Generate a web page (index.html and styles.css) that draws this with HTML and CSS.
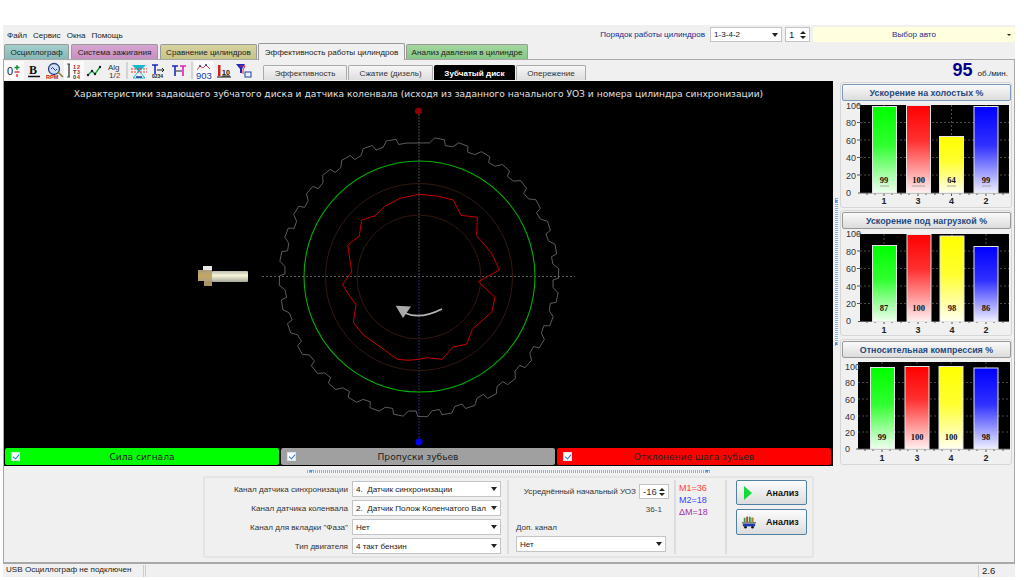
FILE: index.html
```html
<!DOCTYPE html>
<html lang="ru">
<head>
<meta charset="utf-8">
<title>Эффективность работы цилиндров</title>
<link rel="stylesheet" href="styles.css">
</head>
<body>
<div class="app">
  <header class="topbar">
    <nav class="menu"><span>Файл</span><span>Сервис</span><span>Окна</span><span>Помощь</span></nav>
    <div class="top-controls">
      <span class="order-label">Порядок работы цилиндров</span>
      <div class="select order-select"><span>1-3-4-2</span><i class="arrow"></i></div>
      <div class="spin cyl-spin"><span>1</span><b class="spin-btns"><i class="up"></i><i class="down"></i></b></div>
      <div class="auto-select"><span>Выбор авто</span><i class="arrow small"></i></div>
    </div>
  </header>
  <div class="tabs">
    <div class="tab t-teal">Осциллограф</div>
    <div class="tab t-pink">Система зажигания</div>
    <div class="tab t-khaki">Сравнение цилиндров</div>
    <div class="tab t-active">Эффективность работы цилиндров</div>
    <div class="tab t-green">Анализ давления в цилиндре</div>
  </div>
  <main class="main">
    <div class="toolrow">
      <div class="toolgroup">
        <div class="tool on"><svg viewBox="0 0 16 16"><text x="1" y="12" class="ti-zero">0</text><path d="M11 2v5M8.500 4.500h5" stroke="#0a8a2a" stroke-width="1.300"/><path d="M8.500 9h5" stroke="#e02020" stroke-width="1.300"/><path d="M11 11v3" stroke="#e02020" stroke-width="1.300"/></svg></div>
        <div class="tool"><svg viewBox="0 0 16 16"><text x="3" y="11" class="ti-b">B</text><path d="M2 13.500h12" stroke="#111" stroke-width="1.500"/></svg></div>
        <div class="tool"><svg viewBox="0 0 16 16"><circle cx="8" cy="6" r="5.500" fill="#cfe0f5" stroke="#27408b" stroke-width="1.300"/><path d="M5 6q1.500-3 3 0t3 0" fill="none" stroke="#27408b"/><path d="M12 9l5 5" stroke="#8a7a40" stroke-width="1.500"/><text x="0" y="15.500" class="ti-rpm">RPM</text></svg></div>
        <div class="tool on"><svg viewBox="0 0 16 16"><path d="M3 1v13" stroke="#333" stroke-width="1.300"/><path d="M1 1h3M1 14h3" stroke="#555"/><text x="7" y="6" class="ti-num r">1</text><text x="11" y="6" class="ti-num r">2</text><text x="7" y="11" class="ti-num">T</text><text x="11" y="11" class="ti-num r">3</text><text x="7" y="15.500" class="ti-num">0</text><text x="11" y="15.500" class="ti-num r">4</text></svg></div>
        <div class="tool"><svg viewBox="0 0 16 16"><path d="M2 12l4-4 3 3 5-7" fill="none" stroke="#12a030" stroke-width="1.300"/><circle cx="2" cy="12" r="1.200" fill="#123"/><circle cx="6" cy="8" r="1.200" fill="#123"/><circle cx="9" cy="11" r="1.200" fill="#123"/><circle cx="14" cy="4" r="1.200" fill="#123"/></svg></div>
        <div class="tool"><svg viewBox="0 0 16 16"><text x="2" y="7" class="ti-alg">Alg</text><text x="3" y="15" class="ti-alg">1/</text><text x="10" y="15" class="ti-alg r">2</text></svg></div>
      </div>
      <i class="toolsep"></i>
      <div class="toolgroup">
        <div class="tool"><svg viewBox="0 0 16 16"><path d="M1 2h14L8 9z" fill="#18b8c8"/><path d="M2 15h12L8 8z" fill="none" stroke="#18b8c8"/><path d="M0 6h16M0 9h16" stroke="#e03a3a" stroke-dasharray="2 1"/><path d="M5 14h6" stroke="#2030a0" stroke-width="1.500"/></svg></div>
        <div class="tool"><svg viewBox="0 0 16 16"><path d="M1 2h6M4 2v9" stroke="#1a2ac0" stroke-width="1.600"/><path d="M6 7h7M11 5l2 2-2 2" fill="none" stroke="#222"/><text x="1" y="15" class="ti-tiny">0234</text></svg></div>
        <div class="tool"><svg viewBox="0 0 16 16"><path d="M1 3h6M4 3v10" stroke="#1a2ac0" stroke-width="1.600"/><path d="M9 3h6M12 3v10" stroke="#e020c0" stroke-width="1.600"/><path d="M5 8h6" stroke="#222"/></svg></div>
      </div>
      <i class="toolsep"></i>
      <div class="toolgroup">
        <div class="tool on"><svg viewBox="0 0 16 16"><path d="M1 7l3-4 3 2 3-3 4 4" fill="none" stroke="#e04040"/><circle cx="4" cy="3" r="1" fill="#23a"/><circle cx="10" cy="2" r="1" fill="#23a"/><text x="0" y="15.500" class="ti-903">903</text></svg></div>
        <div class="tool"><svg viewBox="0 0 16 16"><path d="M2 2h2.500v11H2z" fill="#d02020"/><path d="M1 14h14" stroke="#111"/><text x="6" y="12" class="ti-ten">10</text><path d="M6 13h8" stroke="#111"/></svg></div>
        <div class="tool"><svg viewBox="0 0 16 16"><path d="M0 1h9L6 6v4H4V6z" fill="#1a2ac0"/><path d="M4 3l5 0-2 4v4" fill="none" stroke="#e02040"/><rect x="9" y="9" width="6" height="5" fill="#e8eeff" stroke="#2040a0"/></svg></div>
      </div>
      <div class="subtabs">
        <div class="subtab">Эффективность</div>
        <div class="subtab">Сжатие (дизель)</div>
        <div class="subtab sub-active">Зубчатый диск</div>
        <div class="subtab">Опережение</div>
      </div>
      <div class="rpm"><b>95</b><span>об./мин.</span></div>
    </div>

    <div class="work">
      <section class="canvas">
        <svg class="scope" viewBox="4 81 829 367">
          <text x="418.500" y="97" class="scope-title">Характеристики задающего зубчатого диска и датчика коленвала (исходя из заданного начального УОЗ и номера цилиндра синхронизации)</text>
          <path d="M262 276.500H575" class="cross-h"/>
          <path d="M419 111V277" class="cross-v"/>
          <path d="M419 277V442" class="cross-b"/>
          <circle cx="419" cy="277" r="93.500" class="ring"/>
          <circle cx="419" cy="277" r="62" class="ring"/>
          <circle cx="419.500" cy="276.500" r="115.500" class="ring-green"/>
          <polyline id="gear" class="gear" points=""/>
          <polygon class="trace" points="419,194.300 400,198.300 384.300,206.700 375,215.700 361.700,220 359.300,236 347.700,245 351.700,271.700 342.700,284.300 345.700,290 356,305 353.300,322.300 363.300,335 380,346.700 397.300,359.300 408.300,360.300 419,359.300 426.700,357.700 442.300,359.300 452.700,347.300 466.700,344 472.300,329.300 492,311.700 495,297.300 478.300,281.700 499.300,270 491.700,253.300 476.700,235.700 477.300,217.300 461,215.300 453.300,200 436.700,196"/>
          <circle cx="418.500" cy="111" r="3.500" fill="#8a0000"/>
          <circle cx="419" cy="442" r="3.500" fill="#0000f0"/>
          <path d="M442 309Q420 320 405 313" class="arrow-arc"/>
          <path d="M395.700 305.700L411 306.500 403 318z" fill="#aaaaaa"/>
          <rect x="212" y="271" width="36" height="11" rx="1" fill="url(#boltBody)"/>
          <rect x="203" y="266" width="9" height="5" fill="#e8e8e4"/>
          <rect x="198" y="270" width="14" height="11" fill="url(#boltHead)"/>
          <rect x="204" y="281" width="8" height="5" fill="#a89468"/>
          <defs>
            <linearGradient id="boltBody" x1="0" y1="0" x2="0" y2="1"><stop offset="0" stop-color="#bdbdb0"/><stop offset=".4" stop-color="#f7f5d8"/><stop offset="1" stop-color="#a8a89c"/></linearGradient>
            <linearGradient id="boltHead" x1="0" y1="0" x2="0" y2="1"><stop offset="0" stop-color="#a89a80"/><stop offset=".5" stop-color="#c4a860"/><stop offset="1" stop-color="#b0a080"/></linearGradient>
          </defs>
        </svg>
        <div class="signals">
          <div class="signal s-green"><i class="check"></i><span>Сила сигнала</span></div>
          <div class="signal s-gray"><i class="check"></i><span>Пропуски зубьев</span></div>
          <div class="signal s-red"><i class="check"></i><span>Отклонение шага зубьев</span></div>
        </div>
      </section>
      <div class="vsplit"></div>
      <aside class="charts">
        <section class="group">
          <button class="chart-title">Ускорение на холостых %</button>
          <svg class="chart" viewBox="842 101 168 106">
            <defs>
              <linearGradient id="gGreen" x1="0" y1="0" x2="0" y2="1"><stop offset="0" stop-color="#00ff00"/><stop offset=".45" stop-color="#30ff30"/><stop offset="1" stop-color="#f0fff0"/></linearGradient>
              <linearGradient id="gRed" x1="0" y1="0" x2="0" y2="1"><stop offset="0" stop-color="#ff0000"/><stop offset=".4" stop-color="#ff3030"/><stop offset="1" stop-color="#fff0f0"/></linearGradient>
              <linearGradient id="gYellow" x1="0" y1="0" x2="0" y2="1"><stop offset="0" stop-color="#ffff00"/><stop offset=".45" stop-color="#ffff30"/><stop offset="1" stop-color="#fffff0"/></linearGradient>
              <linearGradient id="gBlue" x1="0" y1="0" x2="0" y2="1"><stop offset="0" stop-color="#0000ff"/><stop offset=".45" stop-color="#3030ff"/><stop offset="1" stop-color="#f0f0ff"/></linearGradient>
            </defs>
            <rect x="860" y="105" width="149" height="88" fill="#000"/>
            <path d="M860 122.500h149M860 140h149M860 157.500h149M860 175h149M951.500 105v88M884 105v88M918 105v88M986 105v88" class="grid"/>
            <path d="M858 193h151" class="axis"/>
            <path d="M884 193v3M918 193v3M951.500 193v3M986 193v3M867 193v2M875 193v2M892 193v2M901 193v2M909 193v2M926 193v2M935 193v2M943 193v2M960 193v2M969 193v2M977 193v2M994 193v2M1003 193v2M857 105h3M857 122.500h3M857 140h3M857 157.500h3M857 175h3" class="ticks"/>
            <text x="846" y="108.500" class="ylab">100</text><text x="846" y="126" class="ylab">80</text><text x="846" y="143.500" class="ylab">60</text><text x="846" y="161" class="ylab">40</text><text x="846" y="178.500" class="ylab">20</text><text x="846" y="195.500" class="ylab">0</text>
            <rect x="872.500" y="106.500" width="24" height="86.500" fill="url(#gGreen)" class="bar"/>
            <rect x="906.500" y="105.500" width="24" height="87.500" fill="url(#gRed)" class="bar"/>
            <rect x="939.500" y="136.500" width="24" height="56.500" fill="url(#gYellow)" class="bar"/>
            <rect x="974" y="106.500" width="24" height="86.500" fill="url(#gBlue)" class="bar"/>
            <path d="M880 186h9M912 186h13M947 186h9M982 186h9" class="under"/>
            <text x="884" y="183" class="val">99</text><text x="918.500" y="183" class="val">100</text><text x="951.500" y="183" class="val">64</text><text x="986" y="183" class="val">99</text>
            <text x="884" y="204" class="xlab">1</text><text x="918" y="204" class="xlab">3</text><text x="951.500" y="204" class="xlab">4</text><text x="986" y="204" class="xlab">2</text>
          </svg>
        </section>
        <section class="group">
          <button class="chart-title">Ускорение под нагрузкой %</button>
          <svg class="chart" viewBox="842 229 168 106">
            <rect x="860" y="234" width="149" height="87" fill="#000"/>
            <path d="M860 251h149M860 268.500h149M860 286h149M860 303.500h149M884 234v87M918 234v87M952 234v87M986 234v87" class="grid"/>
            <path d="M858 321.500h151" class="axis"/>
            <path d="M884 321v3M918 321v3M952 321v3M986 321v3M867 321v2M875 321v2M892 321v2M901 321v2M909 321v2M926 321v2M935 321v2M943 321v2M960 321v2M969 321v2M977 321v2M994 321v2M1003 321v2M857 234h3M857 251h3M857 268.500h3M857 286h3M857 303.500h3" class="ticks"/>
            <text x="846" y="237" class="ylab">100</text><text x="846" y="254.500" class="ylab">80</text><text x="846" y="272" class="ylab">60</text><text x="846" y="289.500" class="ylab">40</text><text x="846" y="307" class="ylab">20</text><text x="846" y="324" class="ylab">0</text>
            <rect x="872.500" y="245.500" width="24" height="76" fill="url(#gGreen)" class="bar"/>
            <rect x="907" y="234.500" width="24" height="87" fill="url(#gRed)" class="bar"/>
            <rect x="940" y="236" width="24" height="85.500" fill="url(#gYellow)" class="bar"/>
            <rect x="974" y="246.500" width="24" height="75" fill="url(#gBlue)" class="bar"/>
            <text x="884" y="311" class="val">87</text><text x="918.500" y="311" class="val">100</text><text x="952" y="311" class="val">98</text><text x="986" y="311" class="val">86</text>
            <text x="884" y="333" class="xlab">1</text><text x="918" y="333" class="xlab">3</text><text x="952" y="333" class="xlab">4</text><text x="986" y="333" class="xlab">2</text>
          </svg>
        </section>
        <section class="group third">
          <button class="chart-title">Относительная компрессия %</button>
          <svg class="chart" viewBox="842 358 168 106">
            <rect x="858" y="362" width="152" height="87" fill="#000"/>
            <path d="M858 382.500h152M858 399h152M858 416h152M858 432h152M882 362v87M917 362v87M951 362v87M986 362v87" class="grid"/>
            <path d="M856 449h154" class="axis"/>
            <path d="M882 449v3M917 449v3M951 449v3M986 449v3M865 449v2M873 449v2M890 449v2M900 449v2M908 449v2M925 449v2M934 449v2M942 449v2M959 449v2M969 449v2M977 449v2M994 449v2M1003 449v2" class="ticks"/>
            <text x="845" y="369.500" class="ylab">100</text><text x="845" y="386" class="ylab">80</text><text x="845" y="402.500" class="ylab">60</text><text x="845" y="419.500" class="ylab">40</text><text x="845" y="435.500" class="ylab">20</text><text x="845" y="451.500" class="ylab">0</text>
            <rect x="870.500" y="367.500" width="24" height="81.500" fill="url(#gGreen)" class="bar"/>
            <rect x="905" y="366.500" width="24" height="82.500" fill="url(#gRed)" class="bar"/>
            <rect x="939" y="366.500" width="24" height="82.500" fill="url(#gYellow)" class="bar"/>
            <rect x="974" y="368" width="24" height="81" fill="url(#gBlue)" class="bar"/>
            <text x="882" y="440" class="val">99</text><text x="917" y="440" class="val">100</text><text x="951" y="440" class="val">100</text><text x="986" y="440" class="val">98</text>
            <text x="882" y="461" class="xlab">1</text><text x="917" y="461" class="xlab">3</text><text x="951" y="461" class="xlab">4</text><text x="986" y="461" class="xlab">2</text>
          </svg>
        </section>
      </aside>
    </div>

    <div class="formarea">
      <div class="hsplit"></div>
      <section class="formgroup">
        <div class="fields">
          <label>Канал датчика синхронизации</label><div class="select"><span>4.&nbsp; Датчик синхронизации</span><i class="arrow"></i></div>
          <label>Канал датчика коленвала</label><div class="select"><span>2.&nbsp; Датчик Полож Коленчатого Вал</span><i class="arrow"></i></div>
          <label>Канал для вкладки "Фаза"</label><div class="select"><span>Нет</span><i class="arrow"></i></div>
          <label>Тип двигателя</label><div class="select"><span>4 такт бензин</span><i class="arrow"></i></div>
        </div>
        <div class="col-uoz">
          <div class="uoz-row"><span>Усреднённый начальный УОЗ</span><div class="spin uoz-spin"><span>-16</span><b class="spin-btns"><i class="up"></i><i class="down"></i></b></div></div>
          <div class="teeth">36-1</div>
          <div class="extra-label">Доп. канал</div>
          <div class="select extra-select"><span>Нет</span><i class="arrow"></i></div>
        </div>
        <div class="col-m">
          <div class="m1">M1=36</div>
          <div class="m2">M2=18</div>
          <div class="m3">ΔM=18</div>
        </div>
        <div class="col-btn">
          <button class="run"><svg viewBox="0 0 14 16"><path d="M2 1l8 7-8 7z" fill="#16d83a"/></svg><span>Анализ</span></button>
          <button class="run tall"><svg viewBox="0 0 16 16"><path d="M3 3v5M6 2v6M9 2v6M12 3v5" stroke-width="2" stroke="#3a9a3a"/><path d="M6 2v6" stroke="#c04040" stroke-width="2"/><path d="M12 3v5" stroke="#b08a30" stroke-width="2"/><path d="M1 10h14v3H1z" fill="#1a3ab0"/><path d="M0 9h16" stroke="#222"/><circle cx="4" cy="14" r="1.500" fill="#111"/><circle cx="12" cy="14" r="1.500" fill="#111"/></svg><span>Анализ</span></button>
        </div>
      </section>
    </div>
  </main>
  <footer class="status">
    <div class="st-usb">USB Осциллограф не подключен</div>
    <div class="st-mid"></div>
    <div class="st-ver">2.6</div>
  </footer>
</div>
<script src="gear.js"></script>
</body>
</html>
```
FILE: styles.css
```css
* { box-sizing: border-box; }
html, body { margin: 0; padding: 0; background: #fff; }
body { width: 1024px; height: 580px; overflow: hidden; font-family: "Liberation Sans", Arial, sans-serif; font-size: 8.100px; color: #222; }
i, b { display: block; font-style: normal; }

.app { width: 1012px; height: 552px; margin: 25px 0 0 3px; background: #f0f0f0; display: flex; flex-direction: column; }

.topbar { height: 18px; display: flex; justify-content: space-between; align-items: center; }
.menu { display: flex; gap: 6px; padding-left: 4px; padding-top: 2px; color: #222; }
.top-controls { display: flex; align-items: center; gap: 3px; padding-top: 1px; }
.order-label { color: #1a2a8a; margin-right: 2px; }
.select { display: flex; align-items: center; justify-content: space-between; height: 16px; background: #fff; border: 1px solid #c4c4c4; padding: 0 3px 0 3px; color: #222; white-space: nowrap; overflow: hidden; }
.order-select { width: 72px; height: 15px; }
.arrow { width: 0; height: 0; border-left: 3.500px solid transparent; border-right: 3.500px solid transparent; border-top: 4px solid #222; flex: none; }
.arrow.small { border-left-width: 2px; border-right-width: 2px; border-top-width: 2px; }
.spin { display: flex; align-items: center; justify-content: space-between; background: #fff; border: 1px solid #c4c4c4; padding: 0 3px; height: 15px; font-size: 9.500px; }
.cyl-spin { width: 25px; }
.spin-btns { display: flex; flex-direction: column; gap: 2px; }
.up, .down { width: 0; height: 0; border-left: 3px solid transparent; border-right: 3px solid transparent; }
.up { border-bottom: 3px solid #222; }
.down { border-top: 3px solid #222; }
.auto-select { width: 202px; height: 15px; background: #ffffe0; display: flex; align-items: center; justify-content: center; position: relative; color: #1a2a8a; border-radius: 2px; }
.auto-select .arrow { position: absolute; right: 4px; top: 7px; }

.tabs { height: 16px; display: flex; align-items: flex-end; padding-left: 1px; gap: 2px; }
.tab { height: 15px; border: 1px solid #999; border-bottom: none; border-radius: 2px 2px 0 0; display: flex; align-items: center; justify-content: center; white-space: nowrap; color: #222; }
.t-teal { width: 65px; background: linear-gradient(#a4cfcd, #85b9b8); }
.t-pink { width: 87px; background: linear-gradient(#d6a6d2, #c68fc1); }
.t-khaki { width: 97px; background: linear-gradient(#d6d3a0, #c6c388); }
.t-active { width: 147px; height: 17px; margin: 0 -1px -1px -1px; background: #f0f0f0; position: relative; z-index: 1; }
.t-green { width: 122px; background: linear-gradient(#a4d8a0, #86c784); }

.main { flex: 1; border: 1px solid #a8a8a8; border-bottom: none; display: flex; flex-direction: column; min-height: 0; }

.toolrow { height: 21px; display: flex; align-items: flex-start; }
.toolgroup { display: flex; padding-top: 1px; }
.tool { width: 20px; height: 19px; display: flex; align-items: center; justify-content: center; }
.tool.on { background: #fafafa; }
.tool svg { width: 16px; height: 16px; overflow: visible; }
.toolsep { width: 2px; height: 17px; margin: 2px 1px 0 2px; background: #d4d4d4; }
.ti-zero { font: 11px "Liberation Sans", sans-serif; fill: #222; }
.ti-b { font: bold 12px "Liberation Serif", serif; fill: #111; }
.ti-rpm { font: bold 5.500px "Liberation Sans", sans-serif; fill: #c02020; }
.ti-num { font: bold 5.500px "Liberation Sans", sans-serif; fill: #333; }
.ti-num.r, .ti-alg.r { fill: #d02020; }
.ti-alg { font: 8px "Liberation Sans", sans-serif; fill: #333; }
.ti-tiny { font: bold 5px "Liberation Sans", sans-serif; fill: #222; }
.ti-903 { font: 9.500px "Liberation Sans", sans-serif; fill: #2038b0; }
.ti-ten { font: bold 7px "Liberation Sans", sans-serif; fill: #111; }

.subtabs { display: flex; gap: 1px; margin: 5px 0 0 9px; }
.subtab { height: 15px; border: 1px solid #aaa; border-bottom: none; border-radius: 2px 2px 0 0; display: flex; align-items: center; justify-content: center; background: linear-gradient(#f6f6f6, #dedede); color: #333; }
.subtab:nth-child(1) { width: 84px; }
.subtab:nth-child(2) { width: 85px; }
.subtab:nth-child(3) { width: 81px; }
.subtab:nth-child(4) { width: 70px; }
.sub-active { background: #000; color: #fff; font-weight: 700; border-color: #000; }
.rpm { margin-left: auto; display: flex; align-items: baseline; padding-right: 6px; color: #222; white-space: nowrap; }
.rpm b { font: bold 18px "Liberation Sans", sans-serif; color: #00008b; margin-right: 5px; line-height: 21px; }

.work { height: 385px; display: flex; }
.canvas { width: 829px; background: #000; display: flex; flex-direction: column; }
.scope { display: block; width: 829px; height: 367px; }
.scope-title { font: 9.150px "DejaVu Sans", sans-serif; fill: #e0e0e0; text-anchor: middle; }
.cross-h { stroke: #5c5c5c; stroke-dasharray: 2 2; fill: none; }
.cross-v { stroke: #4a4a52; stroke-dasharray: 2 1; fill: none; }
.cross-b { stroke: #2c2c7a; stroke-dasharray: 2 1; fill: none; }
.ring { fill: none; stroke: #331810; }
.ring-green { fill: none; stroke: #00b000; stroke-width: 1.100; }
.gear { fill: none; stroke: #747474; stroke-width: .8; }
.trace { fill: none; stroke: #c80000; stroke-width: 1; }
.arrow-arc { fill: none; stroke: #b4b4b4; stroke-width: 1.800; }
.signals { height: 18px; display: flex; gap: 2px; padding-left: 1px; }
.signal { width: 274px; height: 17px; border-radius: 2px; display: flex; align-items: center; justify-content: center; position: relative; font: 9.100px "DejaVu Sans", sans-serif; color: #222; }
.s-green { background: #00ff00; }
.s-gray { background: #a0a0a0; }
.s-red { background: #ff0000; }
.check { position: absolute; left: 6px; top: 4px; width: 9px; height: 9px; background: #fff; border: 1px solid #d8e4f0; }
.check::after { content: ""; position: absolute; left: 2px; top: 0; width: 3px; height: 5px; border: solid #2b7bd8; border-width: 0 1.500px 1.500px 0; transform: rotate(40deg); }

.vsplit { width: 3px; height: 148px; margin: 117px 2px 0 2px; background: repeating-linear-gradient(#7fb0e0 0 1px, #f4f8fc 1px 2px); position: relative; }
.vsplit::before, .vsplit::after { content: ""; position: absolute; left: 0; border-left: 3px solid #4a90e0; border-top: 2.500px solid transparent; border-bottom: 2.500px solid transparent; }
.vsplit::before { top: 1px; }
.vsplit::after { bottom: 0; }

.charts { width: 172px; display: flex; flex-direction: column; gap: 2px; padding-top: 1px; }
.group { height: 126px; border: 1px solid #d6d6d6; border-radius: 3px; padding: 1px 0 0 1px; }
.third { margin-top: 1px; }
.chart-title { display: block; width: 169px; height: 17px; padding: 0; border: 1px solid #7d9ab8; border-radius: 2px; background: linear-gradient(#fafafa, #dcdcdc); font: 700 8.900px "Liberation Sans", sans-serif; color: #1f4a80; }
.third .chart-title { border-color: #999; }
.group:nth-child(2) .chart-title { border-color: #999; }
.chart { display: block; width: 168px; height: 106px; }
.grid { stroke: #4a4a4a; stroke-dasharray: 2 2; fill: none; }
.axis { stroke: #555; fill: none; }
.ticks { stroke: #555; fill: none; }
.ylab { font: 9px "Liberation Sans", sans-serif; fill: #333; }
.xlab { font: bold 9px "Liberation Sans", sans-serif; fill: #222; text-anchor: middle; }
.val { font: bold 8.500px "Liberation Serif", serif; fill: #111; text-anchor: middle; }
.bar { stroke: #e4e4e4; stroke-width: 1; }
.under { stroke: #a8a8a8; fill: none; }

.formarea { height: 96px; display: flex; flex-direction: column; }
.hsplit { width: 404px; height: 3px; margin: 4px 0 0 303px; background: repeating-linear-gradient(90deg, #7fb0e0 0 1px, #f4f8fc 1px 2px); position: relative; }
.hsplit::before, .hsplit::after { content: ""; position: absolute; top: 0; border-top: 3px solid #4a90e0; border-left: 2.500px solid transparent; border-right: 2.500px solid transparent; }
.hsplit::before { left: 2px; }
.hsplit::after { right: 2px; }
.formgroup { width: 611px; height: 82px; margin: 3px 0 0 199px; border: 2px solid #e4e4e4; border-radius: 3px; display: flex; }
.fields { width: 296px; margin-top: 3px; display: grid; grid-template-columns: 143px 149px; gap: 3px 4px; align-content: start; }
.fields label { display: flex; align-items: center; justify-content: flex-end; white-space: nowrap; color: #333; height: 16px; }
.col-uoz { width: 169px; margin: 2px 0 2px 6px; border-left: 2px solid #dcdcdc; border-right: 2px solid #dcdcdc; display: flex; flex-direction: column; }
.uoz-row { display: flex; align-items: center; justify-content: flex-end; gap: 3px; padding: 4px 5px 0 0; white-space: nowrap; color: #333; }
.uoz-spin { width: 30px; }
.teeth { text-align: right; padding: 6px 12px 0 0; color: #444; }
.extra-label { padding: 9px 0 0 7px; color: #333; }
.extra-select { width: 150px; margin: 4px 0 0 7px; }
.col-m { width: 51px; margin: 2px 0; padding: 2px 0 0 3px; border-right: 2px solid #dcdcdc; font: 9px/12px "Liberation Sans", sans-serif; }
.m1 { color: #ff4040; }
.m2 { color: #4040ff; }
.m3 { color: #a030a0; }
.col-btn { padding: 2px 0 0 9px; display: flex; flex-direction: column; gap: 4px; }
.run { width: 71px; height: 25px; padding: 0 0 0 5px; border: 1px solid #4f81a5; border-radius: 2px; background: linear-gradient(#fcfcfc, #dcdcdc); display: flex; align-items: center; font: 700 9px "Liberation Sans", sans-serif; color: #111; }
.run.tall { height: 26px; }
.run svg { width: 14px; height: 16px; flex: none; overflow: visible; }
.run span { margin-left: 10px; }

.status { height: 15px; display: flex; gap: 1px; border-top: 2px solid #a8a8a8; padding-top: 1px; color: #222; }
.st-usb { width: 141px; padding-left: 3px; white-space: nowrap; border-right: 1px solid #ccc; }
.st-mid { flex: 1; border-left: 1px solid #ccc; border-right: 1px solid #ccc; }
.st-ver { width: 35px; padding-left: 2px; font-size: 9.500px; }
```
FILE: gear.js
```js
var cx = 419, cy = 277, inner = 134.5, outer = 140, pts = [];
function polar(deg, r) {
  var a = (deg - 90) * Math.PI / 180;
  return (cx + r * Math.cos(a)).toFixed(1) + "," + (cy + r * Math.sin(a)).toFixed(1);
}
for (var i = 0; i < 36; i++) {
  var c = -2 + i * 10;
  if (i === 0) {
    pts.push(polar(c - 3.5, inner), polar(c + 6.5, inner));
  } else {
    pts.push(polar(c - 3.5, inner), polar(c - 1.5, outer), polar(c + 2.5, outer - 0.5), polar(c + 3.3, inner - 0.5), polar(c + 6.5, inner));
  }
}
pts.push(pts[0]);
document.getElementById("gear").setAttribute("points", pts.join(" "));
```
